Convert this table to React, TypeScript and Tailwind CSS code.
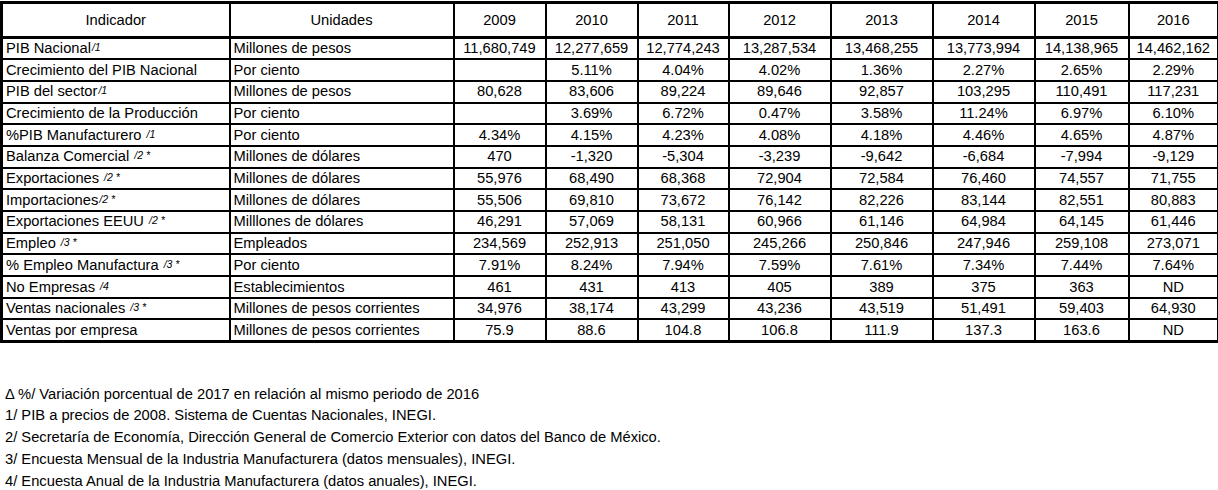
import React from "react";

type Row = { label: string; sup?: string; gap?: boolean; unit: string; values: string[] };

const rows: Row[] = [
  { label: "PIB Nacional", sup: "/1", unit: "Millones de pesos", values: ["11,680,749", "12,277,659", "12,774,243", "13,287,534", "13,468,255", "13,773,994", "14,138,965", "14,462,162"] },
  { label: "Crecimiento del PIB Nacional", unit: "Por ciento", values: ["", "5.11%", "4.04%", "4.02%", "1.36%", "2.27%", "2.65%", "2.29%"] },
  { label: "PIB del sector", sup: "/1", unit: "Millones de pesos", values: ["80,628", "83,606", "89,224", "89,646", "92,857", "103,295", "110,491", "117,231"] },
  { label: "Crecimiento de la Producción", unit: "Por ciento", values: ["", "3.69%", "6.72%", "0.47%", "3.58%", "11.24%", "6.97%", "6.10%"] },
  { label: "%PIB Manufacturero", sup: "/1", gap: true, unit: "Por ciento", values: ["4.34%", "4.15%", "4.23%", "4.08%", "4.18%", "4.46%", "4.65%", "4.87%"] },
  { label: "Balanza Comercial", sup: "/2 *", gap: true, unit: "Millones de dólares", values: ["470", "-1,320", "-5,304", "-3,239", "-9,642", "-6,684", "-7,994", "-9,129"] },
  { label: "Exportaciones", sup: "/2 *", gap: true, unit: "Millones de dólares", values: ["55,976", "68,490", "68,368", "72,904", "72,584", "76,460", "74,557", "71,755"] },
  { label: "Importaciones", sup: "/2 *", unit: "Millones de dólares", values: ["55,506", "69,810", "73,672", "76,142", "82,226", "83,144", "82,551", "80,883"] },
  { label: "Exportaciones EEUU", sup: "/2 *", gap: true, unit: "Milllones de dólares", values: ["46,291", "57,069", "58,131", "60,966", "61,146", "64,984", "64,145", "61,446"] },
  { label: "Empleo", sup: "/3 *", gap: true, unit: "Empleados", values: ["234,569", "252,913", "251,050", "245,266", "250,846", "247,946", "259,108", "273,071"] },
  { label: "% Empleo Manufactura", sup: "/3 *", gap: true, unit: "Por ciento", values: ["7.91%", "8.24%", "7.94%", "7.59%", "7.61%", "7.34%", "7.44%", "7.64%"] },
  { label: "No Empresas", sup: "/4", gap: true, unit: "Establecimientos", values: ["461", "431", "413", "405", "389", "375", "363", "ND"] },
  { label: "Ventas nacionales", sup: "/3 *", gap: true, unit: "Millones de pesos corrientes", values: ["34,976", "38,174", "43,299", "43,236", "43,519", "51,491", "59,403", "64,930"] },
  { label: "Ventas por empresa", unit: "Millones de pesos corrientes", values: ["75.9", "88.6", "104.8", "106.8", "111.9", "137.3", "163.6", "ND"] },
];

const years = ["2009", "2010", "2011", "2012", "2013", "2014", "2015", "2016"];
const widths = [228, 224, 92, 92, 91, 102, 102, 102, 94, 90];

const notes = [
  "Δ %/ Variación porcentual de 2017 en relación al mismo periodo de 2016",
  "1/ PIB a precios de 2008. Sistema de Cuentas Nacionales, INEGI.",
  "2/ Secretaría de Economía, Dirección General de Comercio Exterior con datos del Banco de México.",
  "3/ Encuesta Mensual de la Industria Manufacturera (datos mensuales), INEGI.",
  "4/ Encuesta Anual de la Industria Manufacturera (datos anuales), INEGI.",
];

export default function App() {
  return (
    <div className="w-[1218px] h-[490px] bg-white text-black font-['Liberation_Sans',Arial,sans-serif] overflow-hidden flex flex-col">
      <table className="table-fixed border-collapse w-[1217px] mt-[1px] border-[3px] border-black text-[14.7px] leading-none">
        <colgroup>
          {widths.map((w, i) => (
            <col key={i} style={{ width: w }} />
          ))}
        </colgroup>
        <thead>
          <tr className="h-[35px]">
            <th className="border-2 border-b-[3px] border-black font-normal text-center">Indicador</th>
            <th className="border-2 border-b-[3px] border-black font-normal text-center">Unidades</th>
            {years.map((y) => (
              <th key={y} className="border-2 border-b-[3px] border-black font-normal text-center">
                {y}
              </th>
            ))}
          </tr>
        </thead>
        <tbody>
          {rows.map((r) => (
            <tr key={r.label} className="h-[21.7px]">
              <td className="border-2 border-black px-[3px] whitespace-nowrap">
                {r.label}
                {r.sup && (
                  <sup className={`italic text-[10.5px] relative -top-[2px] ${r.gap ? "ml-[5px]" : "ml-[1px]"}`}>{r.sup}</sup>
                )}
              </td>
              <td className="border-2 border-black px-[3px] whitespace-nowrap">{r.unit}</td>
              {r.values.map((v, i) => (
                <td key={i} className="border-2 border-black text-center whitespace-nowrap">
                  {v}
                </td>
              ))}
            </tr>
          ))}
        </tbody>
      </table>

      <div className="mt-[40px] pl-[5px] flex flex-col text-[15.4px] leading-[21.8px]">
        {notes.map((n) => (
          <div key={n} className="whitespace-nowrap origin-left scale-x-[0.956]">
            {n}
          </div>
        ))}
      </div>
      <div className="mt-auto h-[2px] bg-[#ececec]" />
    </div>
  );
}
